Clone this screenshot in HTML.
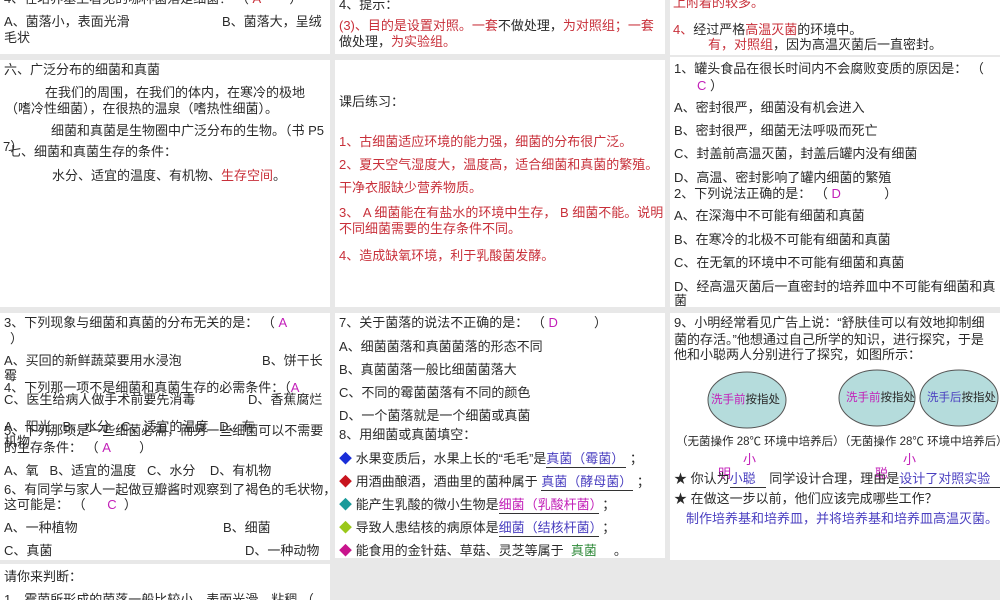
<!DOCTYPE html>
<html><head><meta charset="utf-8"><style>
*{margin:0;padding:0;box-sizing:border-box}
body{width:1000px;height:600px;overflow:hidden;background:#e8e8e8;position:relative;font-family:"Liberation Sans","Noto Sans CJK SC",sans-serif;font-size:13px;color:#2a2a2a}
.p{position:absolute;background:#fff;overflow:hidden}
.t{position:absolute;white-space:nowrap;line-height:16px;height:16px}
.r{color:#c8303a}.m{color:#c21fb8}.b{color:#4a3fc0}.g{color:#2f8a3a}
.u{display:inline-block;border-bottom:1px solid #333;text-align:left}
.d{font-size:11.5px}
</style></head><body>
<!-- row1 -->
<div class="p" style="left:0;top:0;width:330px;height:54px">
<div class="t" style="left:4px;top:-9px">4、在培养基上看见的哪种菌落是细菌？ （ <span class="r">A</span> &nbsp;&nbsp;&nbsp;&nbsp;&nbsp;&nbsp;&nbsp;）</div>
<div class="t" style="left:4px;top:14px">A、菌落小，表面光滑</div>
<div class="t" style="left:222px;top:14px">B、菌落大，呈绒</div>
<div class="t" style="left:4px;top:30px">毛状</div>
</div>
<div class="p" style="left:335px;top:0;width:330px;height:54px">
<div class="t" style="left:4px;top:-3px">4、提示：</div>
<div class="t" style="left:4px;top:18px"><span class="r">(3)、目的是设置对照。一套</span>不做处理，<span class="r">为对照组；一套</span></div>
<div class="t" style="left:4px;top:34px">做处理，<span class="r">为实验组。</span></div>
</div>
<div class="p" style="left:670px;top:0;width:330px;height:55px">
<div class="t r" style="left:3px;top:-5px">上附着的较多。</div>
<div class="t" style="left:3px;top:22px"><span class="r">4、</span>经过严格<span class="r">高温灭菌</span>的环境中。</div>
<div class="t" style="left:38px;top:37px"><span class="r">有，对照组</span>，因为高温灭菌后一直密封。</div>
</div>
<!-- row2 -->
<div class="p" style="left:0;top:60px;width:330px;height:247px">
<div class="t" style="left:4px;top:2px">六、广泛分布的细菌和真菌</div>
<div class="t" style="left:45px;top:25px">在我们的周围，在我们的体内，在寒冷的极地</div>
<div class="t" style="left:5px;top:41px">（嗜冷性细菌），在很热的温泉（嗜热性细菌）。</div>
<div class="t" style="left:51px;top:63px">细菌和真菌是生物圈中广泛分布的生物。（书 P5</div>
<div class="t" style="left:3px;top:79px">7）</div>
<div class="t" style="left:8px;top:84px">七、细菌和真菌生存的条件：</div>
<div class="t" style="left:52px;top:108px">水分、适宜的温度、有机物、<span class="r">生存空间</span>。</div>
</div>
<div class="p" style="left:335px;top:60px;width:330px;height:247px">
<div class="t" style="left:4px;top:34px">课后练习：</div>
<div class="t r" style="left:4px;top:74px">1、古细菌适应环境的能力强，细菌的分布很广泛。</div>
<div class="t r" style="left:4px;top:97px">2、夏天空气湿度大，温度高，适合细菌和真菌的繁殖。</div>
<div class="t r" style="left:4px;top:120px">干净衣服缺少营养物质。</div>
<div class="t r" style="left:4px;top:145px">3、 A 细菌能在有盐水的环境中生存， B 细菌不能。说明</div>
<div class="t r" style="left:4px;top:161px">不同细菌需要的生存条件不同。</div>
<div class="t r" style="left:4px;top:188px">4、造成缺氧环境，利于乳酸菌发酵。</div>
</div>
<div class="p" style="left:670px;top:57px;width:330px;height:250px">
<div class="t" style="left:4px;top:4px">1、罐头食品在很长时间内不会腐败变质的原因是： （</div>
<div class="t" style="left:27px;top:21px"><span class="m">C</span> ）</div>
<div class="t" style="left:4px;top:43px">A、密封很严，细菌没有机会进入</div>
<div class="t" style="left:4px;top:66px">B、密封很严，细菌无法呼吸而死亡</div>
<div class="t" style="left:4px;top:89px">C、封盖前高温灭菌，封盖后罐内没有细菌</div>
<div class="t" style="left:4px;top:113px">D、高温、密封影响了罐内细菌的繁殖</div>
<div class="t" style="left:4px;top:129px">2、下列说法正确的是： （ <span class="m">D</span> &nbsp;&nbsp;&nbsp;&nbsp;&nbsp;&nbsp;&nbsp;&nbsp;&nbsp;&nbsp;&nbsp;）</div>
<div class="t" style="left:4px;top:151px">A、在深海中不可能有细菌和真菌</div>
<div class="t" style="left:4px;top:175px">B、在寒冷的北极不可能有细菌和真菌</div>
<div class="t" style="left:4px;top:198px">C、在无氧的环境中不可能有细菌和真菌</div>
<div class="t" style="left:4px;top:222px">D、经高温灭菌后一直密封的培养皿中不可能有细菌和真</div>
<div class="t" style="left:4px;top:236px">菌</div>
</div>
<!-- row3 -->
<div class="p" style="left:0;top:313px;width:330px;height:247px">
<div class="t" style="left:4px;top:2px">3、下列现象与细菌和真菌的分布无关的是： （ <span class="m">A</span></div>
<div class="t" style="left:10px;top:18px">）</div>
<div class="t" style="left:4px;top:40px">A、买回的新鲜蔬菜要用水浸泡</div>
<div class="t" style="left:262px;top:40px">B、饼干长</div>
<div class="t" style="left:4px;top:55px">霉</div>
<div class="t" style="left:4px;top:67px">4、下列那一项不是细菌和真菌生存的必需条件：（<span class="m">A</span></div>
<div class="t" style="left:4px;top:79px">C、医生给病人做手术前要先消毒</div>
<div class="t" style="left:248px;top:79px">D、香蕉腐烂</div>
<div class="t" style="left:4px;top:106px">A、阳光 &nbsp;&nbsp;B、水分 &nbsp;&nbsp;C、适宜的温度 &nbsp;&nbsp;D、有</div>
<div class="t" style="left:4px;top:110px">5、下列那项是一些细菌必需，而另一些细菌可以不需要</div>
<div class="t" style="left:4px;top:121px">机物</div>
<div class="t" style="left:4px;top:127px">的生存条件： （ <span class="m">A</span> &nbsp;&nbsp;&nbsp;&nbsp;&nbsp;&nbsp;&nbsp;）</div>
<div class="t" style="left:4px;top:150px">A、氧 &nbsp;&nbsp;B、适宜的温度 &nbsp;&nbsp;C、水分 &nbsp;&nbsp;&nbsp;D、有机物</div>
<div class="t" style="left:4px;top:169px">6、有同学与家人一起做豆瓣酱时观察到了褐色的毛状物，</div>
<div class="t" style="left:4px;top:184px">这可能是： （ &nbsp;&nbsp;&nbsp;&nbsp;&nbsp;<span class="m">C</span> &nbsp;）</div>
<div class="t" style="left:4px;top:207px">A、一种植物</div>
<div class="t" style="left:223px;top:207px">B、细菌</div>
<div class="t" style="left:4px;top:230px">C、真菌</div>
<div class="t" style="left:245px;top:230px">D、一种动物</div>
</div>
<div class="p" style="left:335px;top:313px;width:330px;height:245px">
<div class="t" style="left:4px;top:2px">7、关于菌落的说法不正确的是： （ <span class="m">D</span> &nbsp;&nbsp;&nbsp;&nbsp;&nbsp;&nbsp;&nbsp;&nbsp;&nbsp;）</div>
<div class="t" style="left:4px;top:26px">A、细菌菌落和真菌菌落的形态不同</div>
<div class="t" style="left:4px;top:49px">B、真菌菌落一般比细菌菌落大</div>
<div class="t" style="left:4px;top:72px">C、不同的霉菌菌落有不同的颜色</div>
<div class="t" style="left:4px;top:95px">D、一个菌落就是一个细菌或真菌</div>
<div class="t" style="left:4px;top:114px">8、用细菌或真菌填空：</div>
<div class="t" style="left:4px;top:138px"><span style="color:#1a2ed8">◆</span> 水果变质后，水果上长的“毛毛”是<span class="u b" style="width:80px">真菌（霉菌）</span> ；</div>
<div class="t" style="left:4px;top:161px"><span style="color:#c8141e">◆</span> 用酒曲酿酒，酒曲里的菌种属于 <span class="u b" style="width:92px">真菌（酵母菌）</span> ；</div>
<div class="t" style="left:4px;top:184px"><span style="color:#1a9a9a">◆</span> 能产生乳酸的微小生物是<span class="u m" style="width:100px">细菌（乳酸杆菌）</span> ；</div>
<div class="t" style="left:4px;top:207px"><span style="color:#9ac81a">◆</span> 导致人患结核的病原体是<span class="u b" style="width:100px">细菌（结核杆菌）</span> ；</div>
<div class="t" style="left:4px;top:230px"><span style="color:#c8148c">◆</span> 能食用的金针菇、草菇、灵芝等属于 <span class="u g" style="width:43px">&nbsp;真菌</span> 。</div>
</div>
<div class="p" style="left:670px;top:313px;width:330px;height:247px">
<div class="t" style="left:4px;top:2px">9、小明经常看见广告上说：“舒肤佳可以有效地抑制细</div>
<div class="t" style="left:4px;top:19px">菌的存活。”他想通过自己所学的知识，进行探究，于是</div>
<div class="t" style="left:4px;top:34px">他和小聪两人分别进行了探究，如图所示：</div>
<svg style="position:absolute;left:0;top:0" width="330" height="130">
<ellipse cx="77" cy="87" rx="39" ry="28" fill="#b5dcdc" stroke="#555" stroke-width="1"/>
<ellipse cx="207" cy="85" rx="38" ry="28" fill="#b5dcdc" stroke="#555" stroke-width="1"/>
<ellipse cx="289" cy="85" rx="39" ry="28" fill="#b5dcdc" stroke="#555" stroke-width="1"/>
</svg>
<div class="t d" style="left:41px;top:79px"><span class="m">洗手前</span>按指处</div>
<div class="t d" style="left:176px;top:77px"><span class="m">洗手前</span>按指处</div>
<div class="t d" style="left:257px;top:77px"><span class="b">洗手后</span>按指处</div>
<div class="t d" style="left:6px;top:121px">（无菌操作 28℃ 环境中培养后）（无菌操作 28℃ 环境中培养后）</div>
<div class="t m" style="left:73px;top:139px">小</div>
<div class="t m" style="left:233px;top:139px">小</div>
<div class="t m" style="left:48px;top:153px">明</div>
<div class="t m" style="left:205px;top:153px">聪</div>
<div class="t" style="left:4px;top:158px">★ 你认为<span class="u b" style="width:36px">小聪</span> 同学设计合理，理由是<span class="u b" style="width:102px">设计了对照实验</span> 。</div>
<div class="t" style="left:4px;top:178px">★ 在做这一步以前，他们应该完成哪些工作？</div>
<div class="t b" style="left:16px;top:198px">制作培养基和培养皿，并将培养基和培养皿高温灭菌。</div>
</div>
<!-- row4 -->
<div class="p" style="left:0;top:564px;width:330px;height:36px">
<div class="t" style="left:4px;top:5px">请你来判断：</div>
<div class="t" style="left:4px;top:28px">1、霉菌所形成的菌落一般比较小，表面光滑、粘稠 （</div>
</div>
</body></html>
